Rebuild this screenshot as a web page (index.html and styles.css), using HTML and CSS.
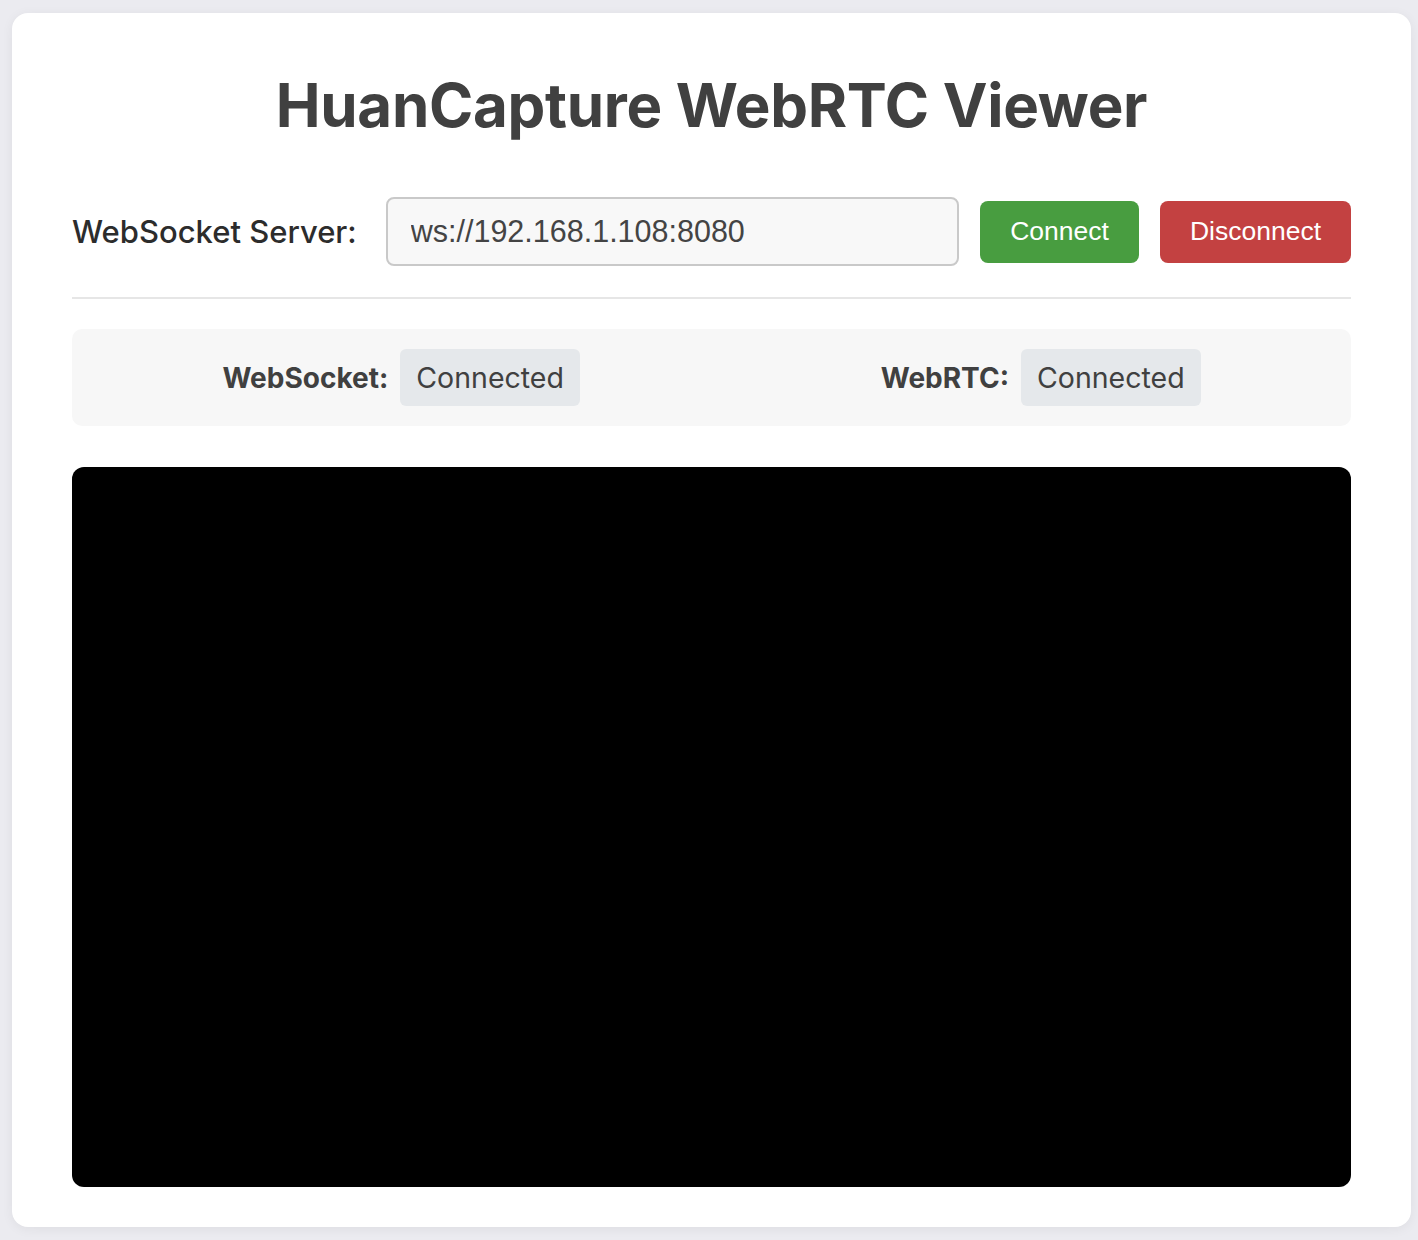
FILE: index.html
```html
<!DOCTYPE html>
<html lang="en">
<head>
<meta charset="utf-8">
<title>HuanCapture WebRTC Viewer</title>
<link rel="stylesheet" href="styles.css">
</head>
<body>
<main class="card">
  <h1 class="title">HuanCapture WebRTC Viewer</h1>
  <div class="controls">
    <label class="server-label" for="server">WebSocket Server:</label>
    <input class="server-input" id="server" type="text" value="ws://192.168.1.108:8080">
    <button class="btn btn-connect">Connect</button>
    <button class="btn btn-disconnect">Disconnect</button>
  </div>
  <hr class="divider">
  <div class="status">
    <div class="status-item">
      <span class="status-label">WebSocket:</span>
      <span class="badge">Connected</span>
    </div>
    <div class="status-item">
      <span class="status-label">WebRTC:</span>
      <span class="badge">Connected</span>
    </div>
  </div>
  <div class="video"></div>
</main>
</body>
</html>
```

FILE: styles.css
```css
html, body {
  margin: 0;
  padding: 0;
}
body {
  background: #ebebf0;
  font-family: Inter, "Noto Sans", sans-serif;
  color: #404040;
  padding: 13px 7px 14px 12px;
}
.card {
  background: #ffffff;
  border-radius: 16px;
  box-shadow: 0 2px 12px rgba(0, 0, 0, 0.06);
  padding: 56px 60px 40px 60px;
}
.title {
  margin: 0;
  text-align: center;
  font-size: 60px;
  font-weight: 700;
  line-height: 73px;
  color: #404040;
  letter-spacing: -0.3px;
}
.controls {
  display: flex;
  align-items: center;
  margin-top: 55px;
}
.server-label {
  font-size: 31px;
  font-weight: 500;
  color: #2c2c2c;
  margin-right: 29px;
}
.server-input {
  flex: 1;
  min-width: 0;
  height: 69px;
  box-sizing: border-box;
  border: 2px solid #c9c9c9;
  border-radius: 8px;
  background: #f8f8f8;
  font-family: "Liberation Sans", Arial, sans-serif;
  font-size: 30.5px;
  color: #444444;
  padding: 0 23px;
  margin-right: 21px;
  outline: none;
}
.btn {
  height: 62px;
  border: none;
  border-radius: 8px;
  color: #ffffff;
  font-family: "Liberation Sans", Arial, sans-serif;
  font-size: 26.5px;
  padding: 0 30px;
}
.btn-connect {
  background: #489d40;
  margin-right: 21px;
}
.btn-disconnect {
  background: #c34141;
}
.divider {
  border: none;
  height: 2px;
  background: #e6e6e6;
  margin: 31px 0 0 0;
}
.status {
  margin-top: 30px;
  background: #f7f7f7;
  border-radius: 10px;
  padding: 20px 0;
  display: flex;
  justify-content: space-around;
}
.status-item {
  display: flex;
  align-items: center;
  gap: 12px;
}
.status-label {
  font-size: 28px;
  font-weight: 700;
  color: #404040;
}
.badge {
  background: #e5e8eb;
  border-radius: 6px;
  font-size: 28.5px;
  height: 57px;
  line-height: 57px;
  padding: 0 16px;
  color: #404040;
}
.video {
  margin-top: 41px;
  height: 720px;
  background: #000000;
  border-radius: 12px;
}
```
